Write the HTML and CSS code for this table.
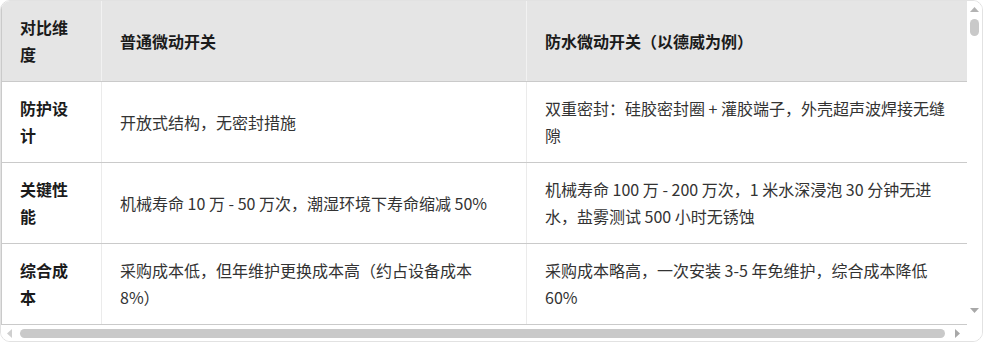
FILE: index.html
```html
<!DOCTYPE html>
<html lang="zh-CN">
<head>
<meta charset="utf-8">
<title>普通微动开关与防水微动开关对比</title>
<link rel="stylesheet" href="styles.css">
</head>
<body>
<div class="frame">
  <div class="viewport">
    <table class="compare">
      <colgroup>
        <col class="c1">
        <col class="c2">
        <col class="c3">
      </colgroup>
      <thead>
        <tr>
          <th>对比维度</th>
          <th class="mid">普通微动开关</th>
          <th class="last">防水微动开关（以德威为例）</th>
        </tr>
      </thead>
      <tbody>
        <tr>
          <th>防护设计</th>
          <td class="mid">开放式结构，无密封措施</td>
          <td class="last">双重密封：硅胶密封圈 + 灌胶端子，外壳超声波焊接无缝隙</td>
        </tr>
        <tr>
          <th>关键性能</th>
          <td class="mid">机械寿命 10 万 - 50 万次，潮湿环境下寿命缩减 50%</td>
          <td class="last">机械寿命 100 万 - 200 万次，1 米水深浸泡 30 分钟无进水，盐雾测试 500 小时无锈蚀</td>
        </tr>
        <tr>
          <th>综合成本</th>
          <td class="mid">采购成本低，但年维护更换成本高（约占设备成本 8%）</td>
          <td class="last">采购成本略高，一次安装 3-5 年免维护，综合成本降低 60%</td>
        </tr>
      </tbody>
    </table>
  </div>

  <div class="vbar" aria-hidden="true">
    <div class="btn btn-up">
      <svg width="9" height="5" viewBox="0 0 9 5"><path d="M0 5L4.5 0L9 5z" fill="#b3b3b3"/></svg>
    </div>
    <div class="vtrack"><div class="vthumb"></div></div>
    <div class="btn btn-down">
      <svg width="9" height="5" viewBox="0 0 9 5"><path d="M0 0L4.5 5L9 0z" fill="#a8a8a8"/></svg>
    </div>
  </div>

  <div class="hbar" aria-hidden="true">
    <div class="btn btn-left">
      <svg width="5" height="9" viewBox="0 0 5 9"><path d="M5 0L0 4.5L5 9z" fill="#cfcfcf"/></svg>
    </div>
    <div class="htrack"><div class="hthumb"></div></div>
    <div class="btn btn-right">
      <svg width="5" height="9" viewBox="0 0 5 9"><path d="M0 0L5 4.5L0 9z" fill="#a8a8a8"/></svg>
    </div>
  </div>

  <div class="corner"></div>
</div>
</body>
</html>
```

FILE: styles.css
```css
html, body {
  margin: 0;
  padding: 0;
  background: #ffffff;
}

body {
  font-family: "Noto Sans CJK SC", "Noto Sans", sans-serif;
  color: #333333;
}

.frame {
  box-sizing: border-box;
  width: 983px;
  height: 342px;
  border: 1px solid #e2e2e2;
  border-radius: 10px;
  overflow: hidden;
  background: #ffffff;
  display: grid;
  grid-template-columns: 966px 15px;
  grid-template-rows: 325px 15px;
}

.viewport {
  overflow: hidden;
  min-width: 0;
  min-height: 0;
}

/* table */
.compare {
  border-collapse: collapse;
  table-layout: fixed;
  width: 974px;
  border-left: 1px solid #cacaca;
  font-size: 16px;
  line-height: 27px;
}

.c1 { width: 100px; }
.c2 { width: 425px; }
.c3 { width: 449px; }

.compare th,
.compare td {
  padding: 13px 18px;
  text-align: left;
  vertical-align: middle;
  border-bottom: 1px solid #cacaca;
  border-left: 1px solid #ebebeb;
}

.compare .mid {
  padding-right: 24px;
}

.compare .last {
  padding-right: 26px;
}

.compare th {
  font-weight: 700;
  color: #1b1b1b;
}

.compare td {
  font-weight: 400;
  color: #333333;
}

.compare thead th {
  background: #e5e5e5;
  border-left-color: #f2f2f2;
}

.compare thead th:first-child,
.compare tbody th {
  border-left: none;
}

/* drawn scrollbars */
.btn {
  display: flex;
  align-items: center;
  justify-content: center;
  flex: none;
}

.btn svg {
  display: block;
}

.vbar {
  display: flex;
  flex-direction: column;
  align-items: stretch;
  background: #ffffff;
}

.btn-up {
  height: 15px;
  align-items: flex-end;
  padding-bottom: 4px;
  box-sizing: border-box;
}

.btn-down {
  height: 15px;
  align-items: flex-start;
  padding-top: 2px;
  padding-bottom: 0;
  margin-bottom: 5px;
  box-sizing: border-box;
}

.vtrack {
  flex: 1;
  display: flex;
  flex-direction: column;
  align-items: center;
}

.vthumb {
  width: 9px;
  height: 17px;
  margin-top: 3px;
  border-radius: 5px;
  background: #c9c9c9;
}

.hbar {
  display: flex;
  flex-direction: row;
  background: #ffffff;
}

.btn-left {
  width: 15px;
  padding-left: 2px;
  box-sizing: border-box;
}

.btn-right {
  width: 15px;
  padding-right: 4px;
  box-sizing: border-box;
}

.htrack {
  flex: 1;
  display: flex;
  align-items: center;
}

.hthumb {
  height: 9px;
  width: 925px;
  margin-left: 4px;
  border-radius: 5px;
  background: #c9c9c9;
}

.corner {
  background: #ffffff;
}
```
